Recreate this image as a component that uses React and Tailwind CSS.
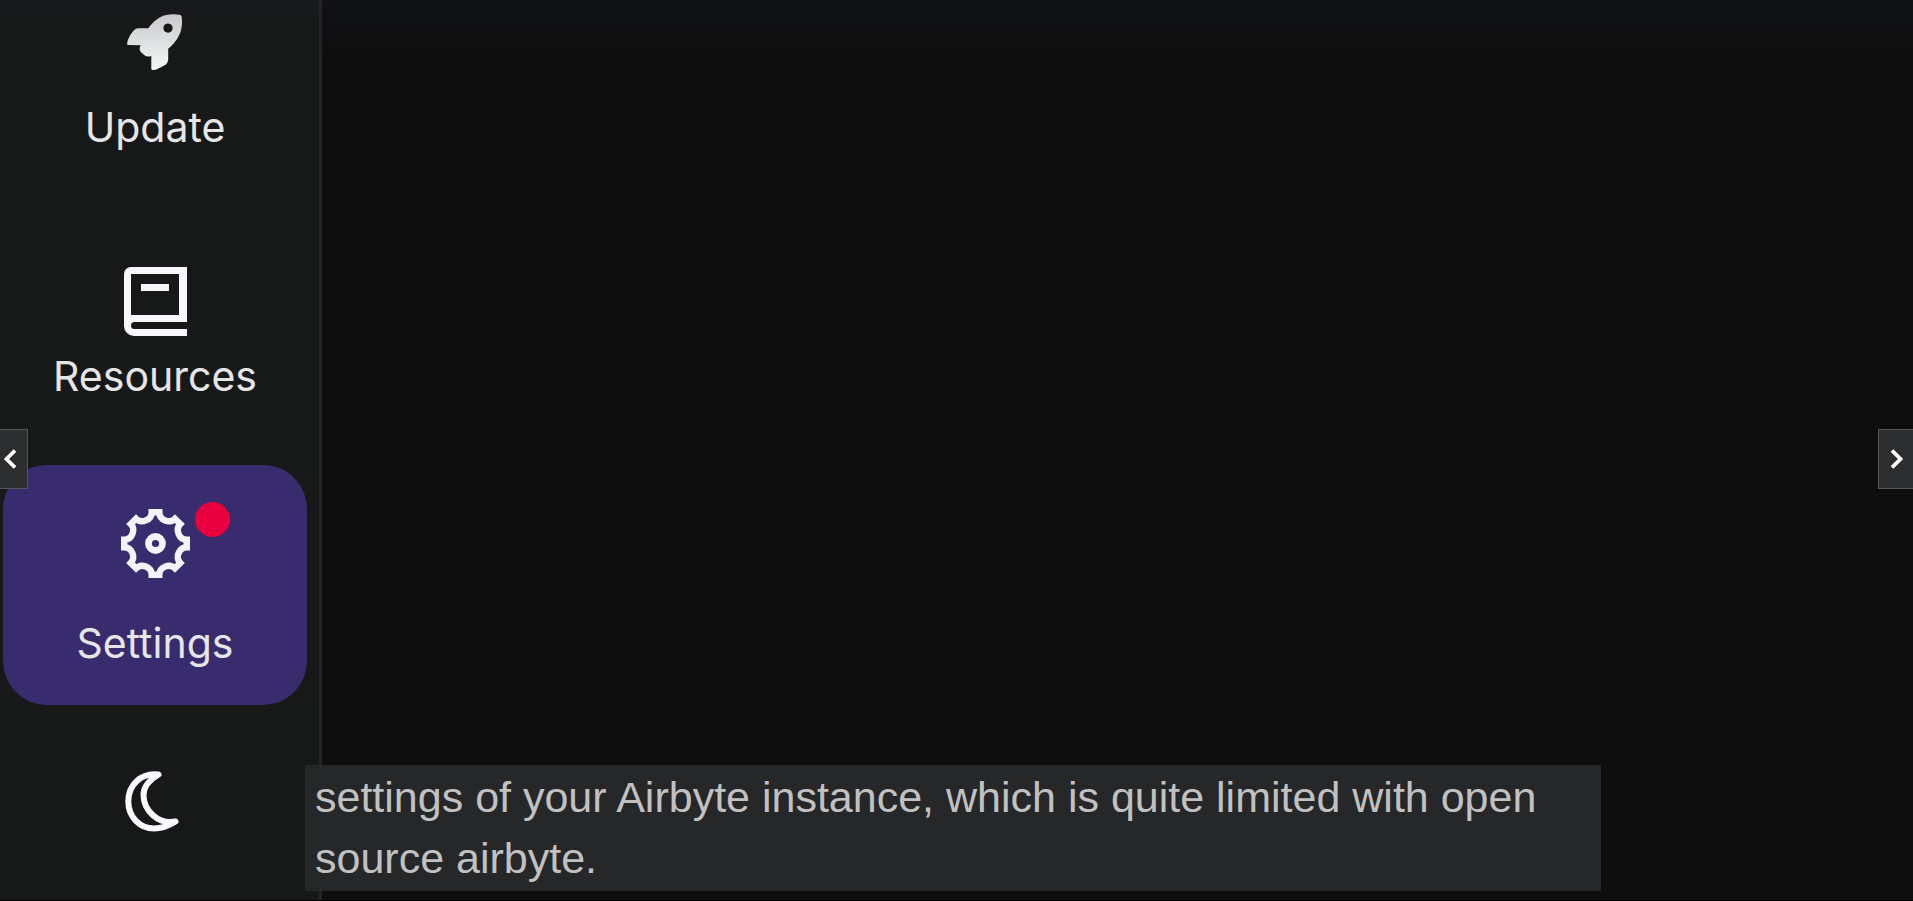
const TOOTH = [
  [-3.8, -31.3],
  [3.8, -31.3],
  [3.8, -23.5],
  [14, -19.3],
];

function turn([x, y], angle) {
  const c = Math.cos(angle);
  const s = Math.sin(angle);
  return `${(x * c - y * s).toFixed(2)} ${(x * s + y * c).toFixed(2)}`;
}

function gearPath() {
  let d = `M${turn(TOOTH[0], 0)}`;
  for (let i = 0; i < 8; i++) {
    const a = (i * Math.PI) / 4;
    const next = turn(TOOTH[0], a + Math.PI / 4);
    d += `L${turn(TOOTH[1], a)}C${turn(TOOTH[2], a)} ${turn(TOOTH[3], a)} ${next}`;
  }
  return `${d}Z`;
}

function RocketIcon() {
  return (
    <svg aria-hidden="true" viewBox="0 0 56 56" className="h-14 w-14">
      <defs>
        <linearGradient id="rocket" x1="0" y1="0" x2="0" y2="1">
          <stop offset="0" stopColor="#c9c9cd" />
          <stop offset="0.6" stopColor="#e2e4e5" />
          <stop offset="1" stopColor="#f6f8f8" />
        </linearGradient>
      </defs>
      <path
        fill="url(#rocket)"
        fillRule="evenodd"
        d="M0.5 31C-0.5 29.5 1 25 2.5 22.5C4 19.5 6 17 8.5 15Q9.5 14.3 11.5 14.2H21.3C26 8 33 0.3 45.3 0.2Q54 0 54.5 2C55.5 8 55 13 53.5 18C51 25 46 31 41.2 34.7V46Q41 48.5 39 50.5C36 52.5 33 53.5 30 55.3Q24.3 57 24.3 54.8V42Q20 43.5 17.5 41.3L13.8 38Q11.5 35 13.7 31.2ZM41 9.5a4.6 4.6 0 1 0 0.01 0Z"
      />
    </svg>
  );
}

function BookIcon() {
  return (
    <svg aria-hidden="true" viewBox="0 0 63 69" className="h-[69px] w-[63px]">
      <path
        fill="#f6f6fb"
        fillRule="evenodd"
        d="M7 0H63V55H10.5a3.5 3.5 0 0 0 0 7H63V69H10A10 10 0 0 1 0 59V7A7 7 0 0 1 7 0ZM7 7V48H55V7ZM17 17h28v7H17Z"
      />
    </svg>
  );
}

function GearIcon() {
  return (
    <svg aria-hidden="true" viewBox="-34.5 -34.5 69 69" className="h-[69px] w-[69px]">
      <g fill="none" stroke="#f4f3fc" strokeWidth="6.4">
        <path d={gearPath()} />
        <circle r="7" strokeWidth="6.8" />
      </g>
    </svg>
  );
}

function MoonIcon() {
  return (
    <svg aria-hidden="true" viewBox="0 0 54 61" className="h-[61px] w-[54px]">
      <path
        fill="none"
        stroke="#f8f8fc"
        strokeWidth="6"
        strokeLinejoin="round"
        d="M33.5 3.5C16 1.5 3.3 14 3.3 30.5C3.3 46 15 57.5 29 57.5C38 57.5 45 54 50.5 50.5C33 54 18.5 39 18.5 24C18.5 14 26 8 33.5 3.5Z"
      />
    </svg>
  );
}

function Chevron({ d }) {
  return (
    <svg aria-hidden="true" viewBox="0 0 14 20" className="h-5 w-3.5">
      <path d={d} fill="none" stroke="#fff" strokeWidth="3.8" />
    </svg>
  );
}

export default function App() {
  return (
    <div className="relative flex min-h-screen overflow-hidden border-b border-black bg-[#0e0e0e] font-['Inter',sans-serif]">
      <nav className="w-[322px] shrink-0 border-r-3 border-[#24232c] bg-[#171918] bg-linear-to-b from-[#17191d] to-[#171918] to-[24px] pr-3 pl-[3px] text-[41px] leading-[48px] text-[#e6e6e8]">
        <a href="#update" className="flex flex-col items-center gap-[33px] pt-3.5">
          <RocketIcon />
          Update
        </a>
        <a href="#resources" className="mt-[116px] flex flex-col items-center gap-4">
          <BookIcon />
          Resources
        </a>
        <a
          href="#settings"
          aria-current="page"
          className="mt-[65px] flex flex-col items-center gap-[41px] rounded-[44px] bg-[#382c6e] pt-11 pb-[38px]"
        >
          <span className="relative">
            <GearIcon />
            <span className="absolute -top-[7px] -right-10 h-[35px] w-[35px] rounded-full bg-[#e9003f]" />
          </span>
          Settings
        </a>
        <button type="button" aria-label="Dark mode" className="mt-[66px] flex w-full justify-center pr-1.5">
          <MoonIcon />
        </button>
      </nav>
      <main className="grow bg-linear-to-b from-[#101215] to-[#0e0e0e] to-[56px]" />

      <p className="absolute right-[312px] bottom-[9px] left-[305px] bg-[#262729] pt-[2px] pr-10 pb-[2px] pl-2.5 font-['Liberation_Sans',Arial,sans-serif] text-[43px] leading-[61px] text-[#c1c1c1]">
        settings of your Airbyte instance, which is quite limited with open source airbyte.
      </p>

      <button
        type="button"
        aria-label="Previous"
        className="absolute top-[429px] left-0 flex h-[60px] w-7 items-center border border-l-0 border-[#55575a] bg-[#2d2e30] pl-[3px]"
      >
        <Chevron d="M12 1.5L3.5 10L12 18.5" />
      </button>
      <button
        type="button"
        aria-label="Next"
        className="absolute top-[429px] right-0 flex h-[60px] w-[35px] items-center border border-r-0 border-[#55575a] bg-[#2d2e30] pl-[11px]"
      >
        <Chevron d="M2 1.5L10.5 10L2 18.5" />
      </button>
    </div>
  );
}
